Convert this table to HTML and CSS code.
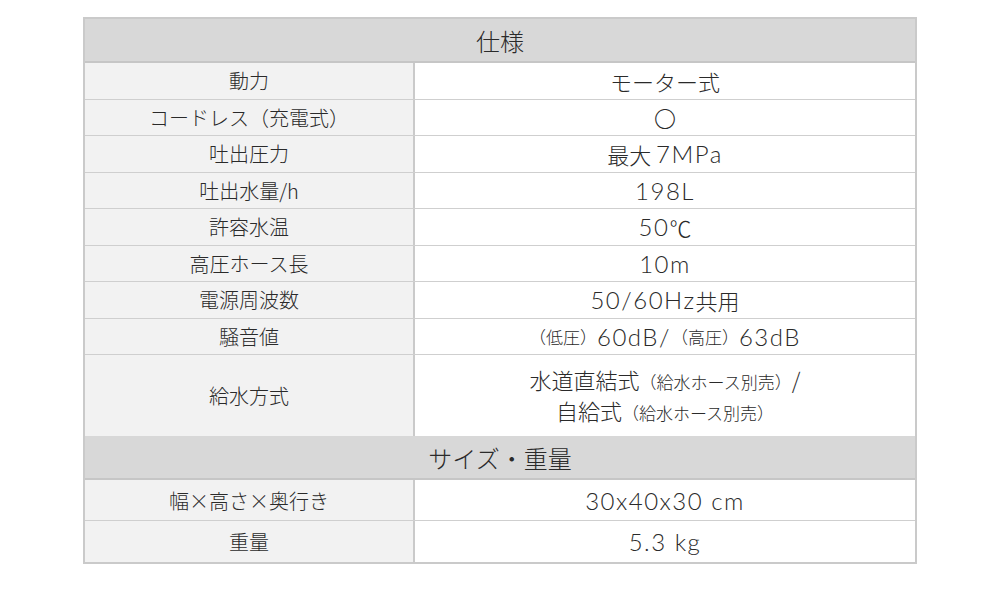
FILE: index.html
```html
<!DOCTYPE html>
<html lang="ja">
<head>
<meta charset="utf-8">
<link rel="stylesheet" href="styles.css">
</head>
<body>
<div class="spec">
  <div class="head">仕様</div>
  <div class="row"><div class="k">動力</div><div class="v">モーター式</div></div>
  <div class="row"><div class="k">コードレス（充電式）</div><div class="v">〇</div></div>
  <div class="row"><div class="k">吐出圧力</div><div class="v">最大&nbsp;<span class="num">7MPa</span></div></div>
  <div class="row"><div class="k">吐出水量/h</div><div class="v"><span class="num">198L</span></div></div>
  <div class="row"><div class="k">許容水温</div><div class="v"><span class="num">50</span>℃</div></div>
  <div class="row"><div class="k">高圧ホース長</div><div class="v"><span class="num">10m</span></div></div>
  <div class="row"><div class="k">電源周波数</div><div class="v"><span class="num">50/60Hz</span>共用</div></div>
  <div class="row"><div class="k">騒音値</div><div class="v"><span class="sm">（低圧）</span><span class="num">60dB/</span><span class="sm">（高圧）</span><span class="num">63dB</span></div></div>
  <div class="row tall"><div class="k">給水方式</div><div class="v col"><span>水道直結式<span class="sm">（給水ホース別売）</span>/</span><span>自給式<span class="sm">（給水ホース別売）</span></span></div></div>
  <div class="head">サイズ・重量</div>
  <div class="row r2"><div class="k">幅×高さ×奥行き</div><div class="v"><span class="num">30x40x30 cm</span></div></div>
  <div class="row r3 last"><div class="k">重量</div><div class="v"><span class="num">5.3 kg</span></div></div>
</div>
</body>
</html>
```

FILE: styles.css
```css
html, body {
  margin: 0;
  padding: 0;
  background: #ffffff;
}
body {
  padding: 17px 0 0 83px;
  font-family: "Noto Sans CJK JP", "Noto Sans", sans-serif;
  font-weight: 300;
  color: #2a2a2a;
}
.spec {
  width: 830px;
  border: 2px solid #cacaca;
  display: flex;
  flex-direction: column;
}
.head {
  height: 42px;
  background: #d8d8d8;
  border-bottom: 2px solid #c6c6c6;
  display: flex;
  align-items: center;
  justify-content: center;
  font-size: 24px;
}
.row {
  display: grid;
  grid-template-columns: 330px 1fr;
  height: 35.5px;
  border-bottom: 1px solid #cfcfcf;
}
.row.tall {
  height: 81px;
  border-bottom: none;
}
.row.r2 { height: 40px; }
.row.r3 { height: 41px; }
.row.last { border-bottom: none; }
.k {
  background: #f2f2f2;
  border-right: 2px solid #cacaca;
  display: flex;
  align-items: center;
  justify-content: center;
  font-size: 20px;
}
.v {
  background: #ffffff;
  display: flex;
  align-items: center;
  justify-content: center;
  font-size: 22px;
}
.v.col {
  flex-direction: column;
  line-height: 28px;
}
.num {
  font-family: "Lato", sans-serif;
  font-weight: 300;
  letter-spacing: 1.5px;
  font-size: 24px;
}
.sm {
  font-size: 17px;
}
```
